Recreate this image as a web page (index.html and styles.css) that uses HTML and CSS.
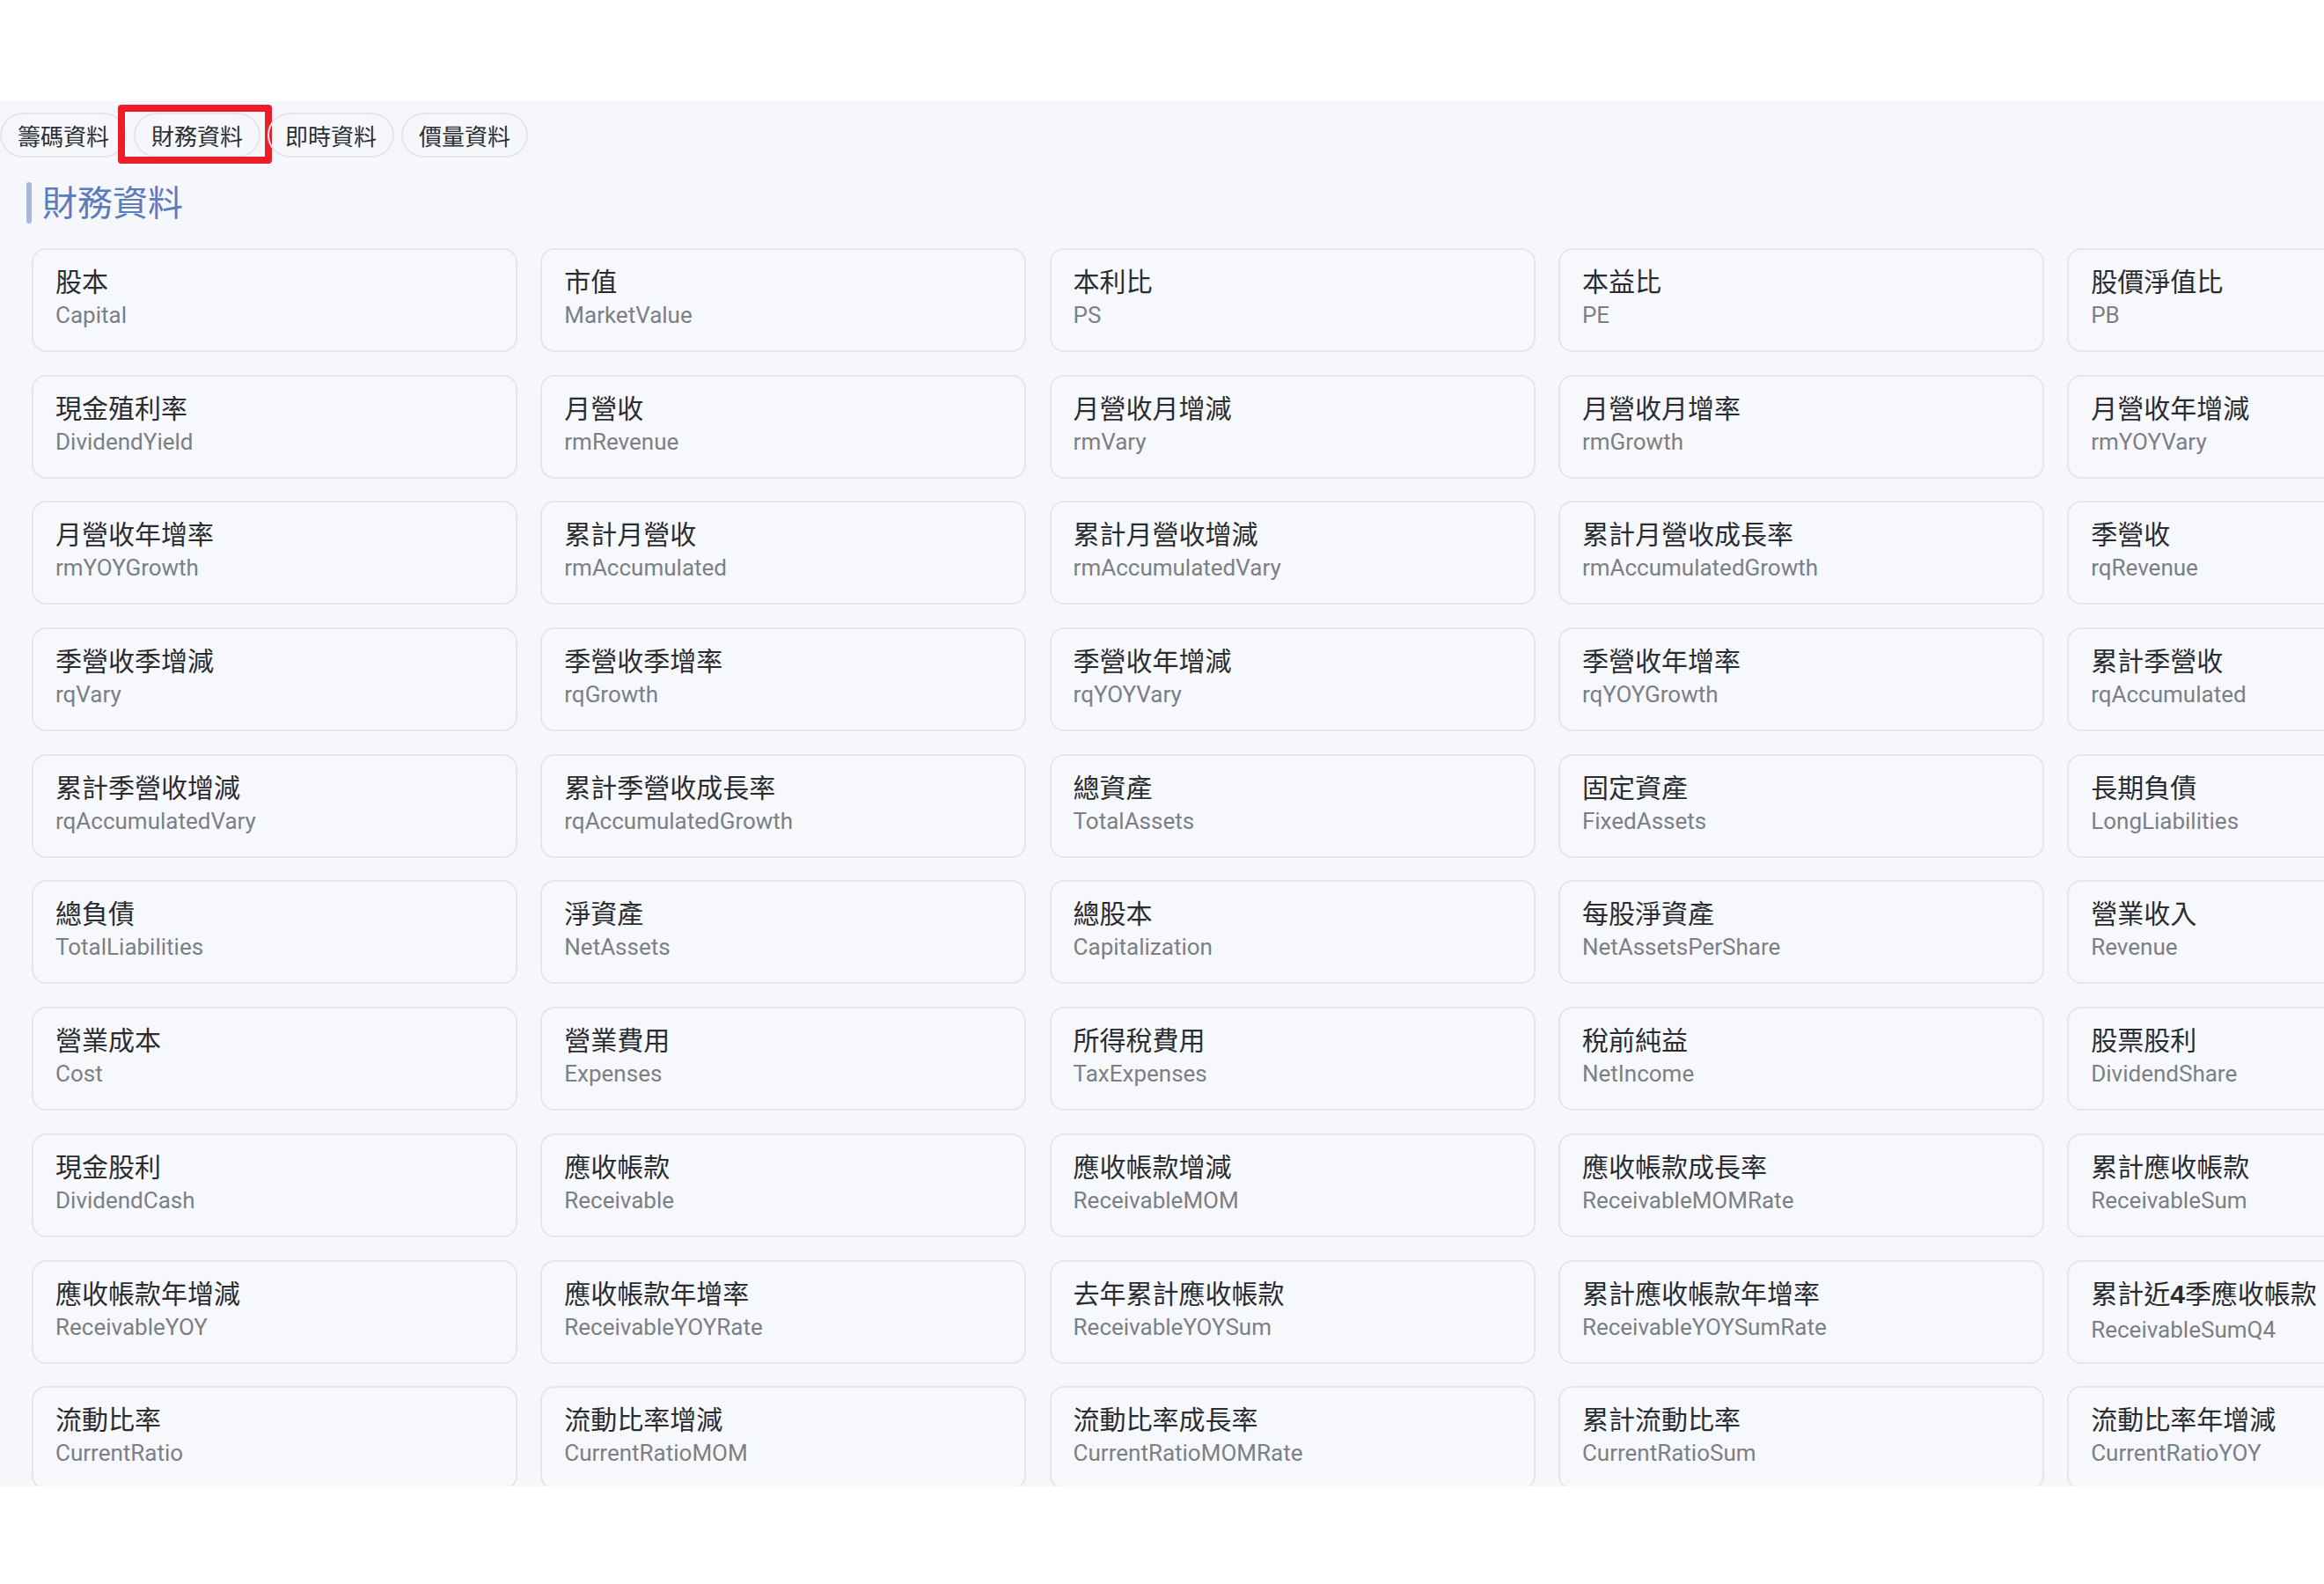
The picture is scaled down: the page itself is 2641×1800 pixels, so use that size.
FILE: index.html
```html
<!DOCTYPE html>
<html lang="zh-Hant">
<head>
<meta charset="utf-8">
<title>財務資料</title>
<link rel="stylesheet" href="styles.css">
</head>
<body>
<div class="top-space"></div>
<section class="panel">
  <nav class="tabs">
    <span class="tab">籌碼資料</span>
    <span class="tab tab-marked">財務資料<span class="mark"></span></span>
    <span class="tab">即時資料</span>
    <span class="tab">價量資料</span>
  </nav>
  <h2 class="heading"><span class="bar"></span><span class="heading-text">財務資料</span></h2>
  <div class="grid">
    <div class="card"><div class="zh">股本</div><div class="en">Capital</div></div>
    <div class="card"><div class="zh">市值</div><div class="en">MarketValue</div></div>
    <div class="card"><div class="zh">本利比</div><div class="en">PS</div></div>
    <div class="card"><div class="zh">本益比</div><div class="en">PE</div></div>
    <div class="card"><div class="zh">股價淨值比</div><div class="en">PB</div></div>

    <div class="card"><div class="zh">現金殖利率</div><div class="en">DividendYield</div></div>
    <div class="card"><div class="zh">月營收</div><div class="en">rmRevenue</div></div>
    <div class="card"><div class="zh">月營收月增減</div><div class="en">rmVary</div></div>
    <div class="card"><div class="zh">月營收月增率</div><div class="en">rmGrowth</div></div>
    <div class="card"><div class="zh">月營收年增減</div><div class="en">rmYOYVary</div></div>

    <div class="card"><div class="zh">月營收年增率</div><div class="en">rmYOYGrowth</div></div>
    <div class="card"><div class="zh">累計月營收</div><div class="en">rmAccumulated</div></div>
    <div class="card"><div class="zh">累計月營收增減</div><div class="en">rmAccumulatedVary</div></div>
    <div class="card"><div class="zh">累計月營收成長率</div><div class="en">rmAccumulatedGrowth</div></div>
    <div class="card"><div class="zh">季營收</div><div class="en">rqRevenue</div></div>

    <div class="card"><div class="zh">季營收季增減</div><div class="en">rqVary</div></div>
    <div class="card"><div class="zh">季營收季增率</div><div class="en">rqGrowth</div></div>
    <div class="card"><div class="zh">季營收年增減</div><div class="en">rqYOYVary</div></div>
    <div class="card"><div class="zh">季營收年增率</div><div class="en">rqYOYGrowth</div></div>
    <div class="card"><div class="zh">累計季營收</div><div class="en">rqAccumulated</div></div>

    <div class="card"><div class="zh">累計季營收增減</div><div class="en">rqAccumulatedVary</div></div>
    <div class="card"><div class="zh">累計季營收成長率</div><div class="en">rqAccumulatedGrowth</div></div>
    <div class="card"><div class="zh">總資產</div><div class="en">TotalAssets</div></div>
    <div class="card"><div class="zh">固定資產</div><div class="en">FixedAssets</div></div>
    <div class="card"><div class="zh">長期負債</div><div class="en">LongLiabilities</div></div>

    <div class="card"><div class="zh">總負債</div><div class="en">TotalLiabilities</div></div>
    <div class="card"><div class="zh">淨資產</div><div class="en">NetAssets</div></div>
    <div class="card"><div class="zh">總股本</div><div class="en">Capitalization</div></div>
    <div class="card"><div class="zh">每股淨資產</div><div class="en">NetAssetsPerShare</div></div>
    <div class="card"><div class="zh">營業收入</div><div class="en">Revenue</div></div>

    <div class="card"><div class="zh">營業成本</div><div class="en">Cost</div></div>
    <div class="card"><div class="zh">營業費用</div><div class="en">Expenses</div></div>
    <div class="card"><div class="zh">所得稅費用</div><div class="en">TaxExpenses</div></div>
    <div class="card"><div class="zh">稅前純益</div><div class="en">NetIncome</div></div>
    <div class="card"><div class="zh">股票股利</div><div class="en">DividendShare</div></div>

    <div class="card"><div class="zh">現金股利</div><div class="en">DividendCash</div></div>
    <div class="card"><div class="zh">應收帳款</div><div class="en">Receivable</div></div>
    <div class="card"><div class="zh">應收帳款增減</div><div class="en">ReceivableMOM</div></div>
    <div class="card"><div class="zh">應收帳款成長率</div><div class="en">ReceivableMOMRate</div></div>
    <div class="card"><div class="zh">累計應收帳款</div><div class="en">ReceivableSum</div></div>

    <div class="card"><div class="zh">應收帳款年增減</div><div class="en">ReceivableYOY</div></div>
    <div class="card"><div class="zh">應收帳款年增率</div><div class="en">ReceivableYOYRate</div></div>
    <div class="card"><div class="zh">去年累計應收帳款</div><div class="en">ReceivableYOYSum</div></div>
    <div class="card"><div class="zh">累計應收帳款年增率</div><div class="en">ReceivableYOYSumRate</div></div>
    <div class="card"><div class="zh">累計近<b class="num">4</b>季應收帳款</div><div class="en">ReceivableSumQ4</div></div>

    <div class="card"><div class="zh">流動比率</div><div class="en">CurrentRatio</div></div>
    <div class="card"><div class="zh">流動比率增減</div><div class="en">CurrentRatioMOM</div></div>
    <div class="card"><div class="zh">流動比率成長率</div><div class="en">CurrentRatioMOMRate</div></div>
    <div class="card"><div class="zh">累計流動比率</div><div class="en">CurrentRatioSum</div></div>
    <div class="card"><div class="zh">流動比率年增減</div><div class="en">CurrentRatioYOY</div></div>
  </div>
</section>
</body>
</html>
```

FILE: styles.css
```css
html, body {
  margin: 0;
  padding: 0;
  background: #ffffff;
  overflow: hidden;
}

body {
  width: 2641px;
  height: 1800px;
  font-family: "Noto Sans CJK TC", "Noto Sans", sans-serif;
}

.top-space {
  height: 115px;
}

.panel {
  height: 1574px;
  box-sizing: border-box;
  background: #f6f7fb;
  overflow: hidden;
  padding-top: 13px;
}

.tabs {
  display: flex;
  gap: 8px;
  height: 51px;
}

.tab {
  position: relative;
  display: flex;
  align-items: center;
  box-sizing: border-box;
  height: 51px;
  padding: 0 18px 0 18px;
  border: 2px solid #e4e6ec;
  border-radius: 26px;
  font-family: "Noto Sans CJK TC", sans-serif;
  font-size: 26px;
  line-height: 30px;
  color: #2c2f36;
  white-space: nowrap;
}

.mark {
  position: absolute;
  top: -11px;
  left: -20px;
  right: -15px;
  bottom: -9px;
  border: 8px solid #ec1c28;
  border-radius: 4px;
  pointer-events: none;
}

.heading {
  display: flex;
  align-items: center;
  gap: 12px;
  margin: 28px 0 0 30px;
  height: 47px;
  font-weight: 400;
}

.bar {
  width: 6px;
  height: 47px;
  border-radius: 3px;
  background: #a6b8da;
}

.heading-text {
  font-family: "Noto Sans CJK TC", sans-serif;
  font-size: 40px;
  line-height: 47px;
  color: #5b7cbd;
  position: relative;
  top: -2px;
}

.grid {
  display: grid;
  grid-template-columns: repeat(5, 552px);
  grid-auto-rows: 118px;
  column-gap: 26.3px;
  row-gap: 25.7px;
  margin: 28px 0 0 36px;
}

.card {
  box-sizing: border-box;
  border: 2px solid #e3e6eb;
  border-radius: 16px;
  padding: 16px 25px 0 25px;
  background: #f7f8fc;
  white-space: nowrap;
}

.zh {
  font-family: "Noto Sans CJK TC", sans-serif;
  font-size: 30px;
  line-height: 36px;
  color: #2a2c31;
}

.zh .num {
  font-family: "Liberation Sans", sans-serif;
  font-weight: 700;
}

.en {
  margin-top: 6px;
  font-family: Roboto, "Liberation Sans", sans-serif;
  font-size: 26px;
  line-height: 32px;
  color: #7c7f86;
}
```
